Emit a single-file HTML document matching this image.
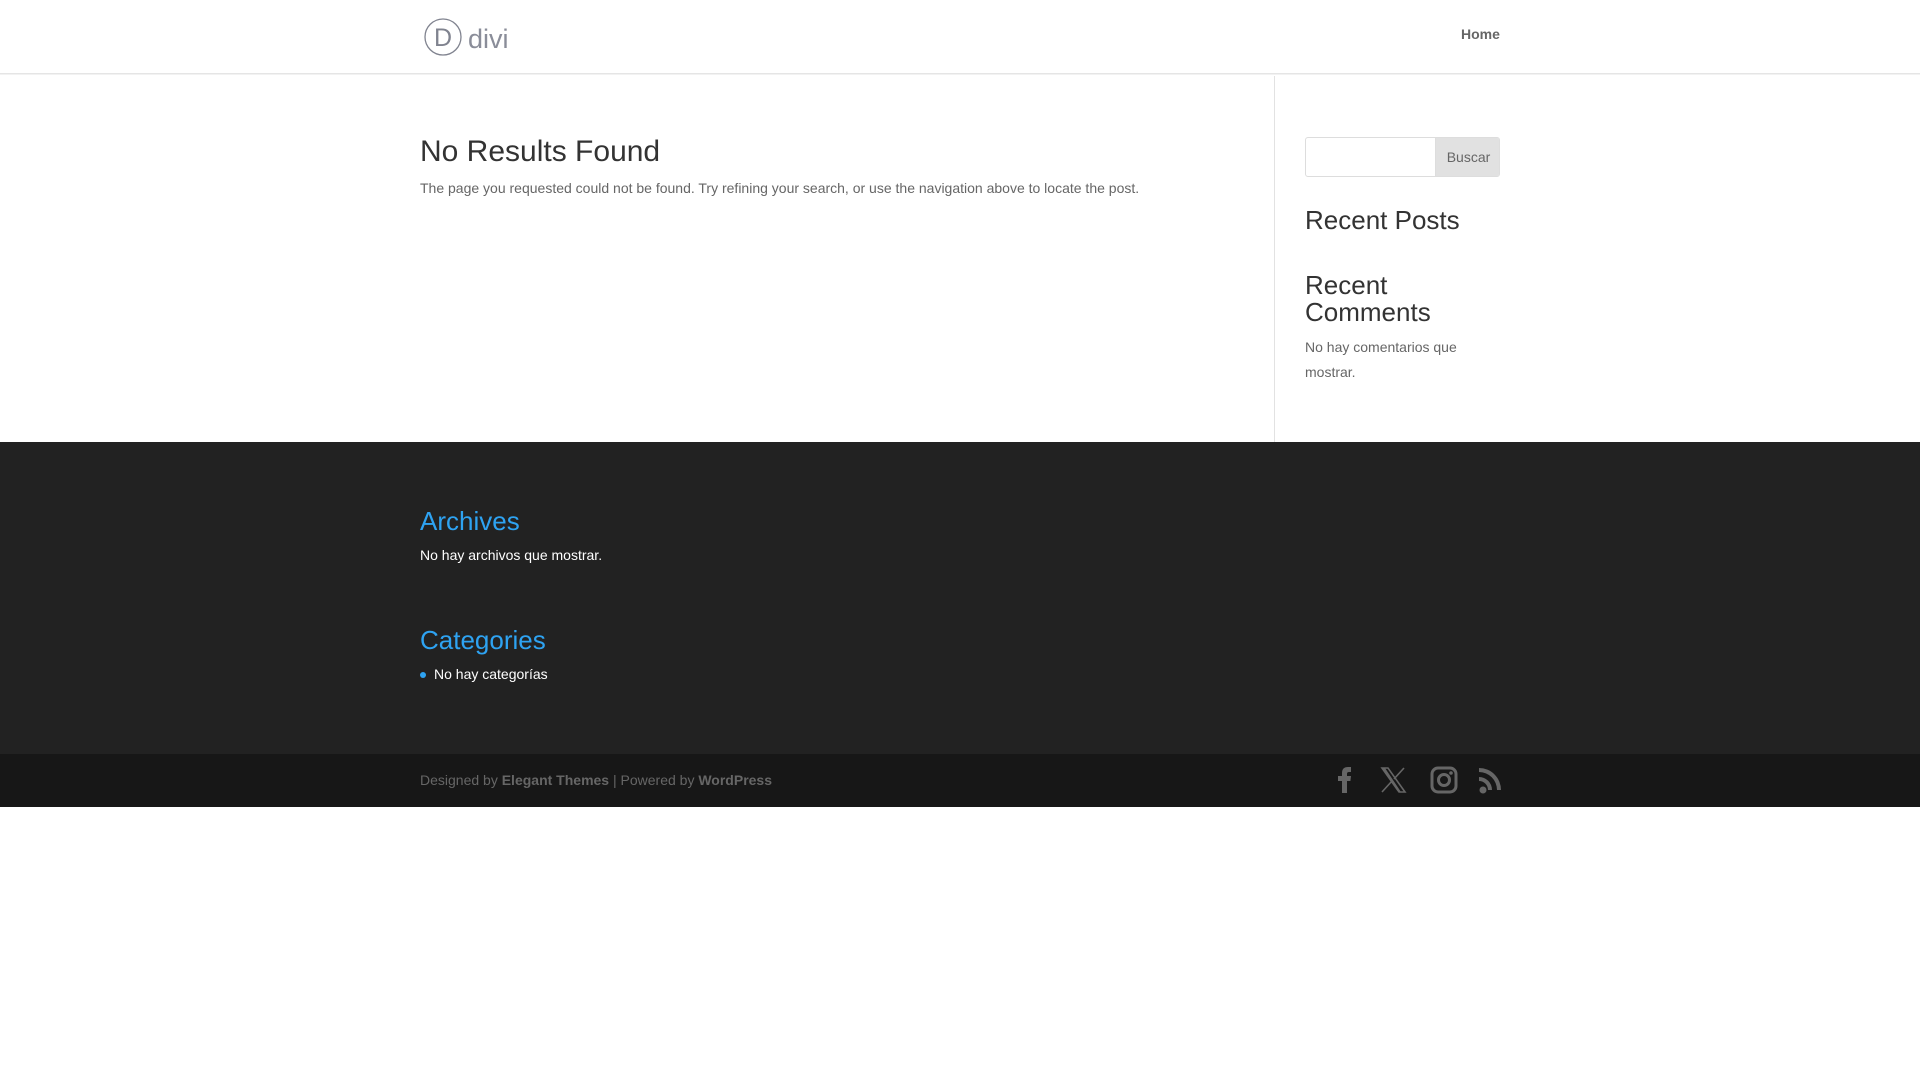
<!DOCTYPE html>
<html><head><meta charset="utf-8"><style>
*{margin:0;padding:0;box-sizing:border-box}
body{width:1920px;height:1080px;background:#fff;font-family:"Liberation Sans",Arial,sans-serif;color:#666;font-size:14px;position:relative;overflow:hidden}
.a{position:absolute;white-space:nowrap}
</style></head><body>
<div class="a" style="left:0;top:0;width:1920px;height:74px;border-bottom:1px solid #e5e5e5;box-shadow:0 1px 0 rgba(0,0,0,.05)"></div>
<svg class="a" style="left:424px;top:17px" width="90" height="42" viewBox="0 0 90 42">
<circle cx="19" cy="20" r="18" fill="none" stroke="#80838f" stroke-width="1.3"/>
<text x="10" y="29" font-family="Liberation Sans" font-size="25" fill="#80838f">D</text>
<text x="44" y="31" font-family="Liberation Sans" font-size="27" fill="#8a8d99">divi</text>
</svg>
<div class="a" style="left:1461px;top:26px;font-size:14px;font-weight:bold;color:#666">Home</div>
<div class="a" style="left:1274px;top:76px;width:1px;height:366px;background:#e2e2e2"></div>
<div class="a" style="left:420px;top:135px;font-size:30px;color:#333">No Results Found</div>
<div class="a" style="left:420px;top:180px;font-size:14px">The page you requested could not be found. Try refining your search, or use the navigation above to locate the post.</div>
<div class="a" style="left:1305px;top:137px;width:195px;height:40px;border:1px solid #ddd;border-radius:3px;overflow:hidden">
<div class="a" style="left:129px;top:0;width:66px;height:38px;background:#e1e1e1;border-left:1px solid #ddd;font-size:14px;color:#666;text-align:center;line-height:38px">Buscar</div></div>
<div class="a" style="left:1305px;top:205px;font-size:26px;color:#333">Recent Posts</div>
<div class="a" style="left:1305px;top:272px;font-size:26px;color:#333;line-height:27px">Recent<br>Comments</div>
<div class="a" style="left:1305px;top:335px;font-size:14px;line-height:25px">No hay comentarios que<br>mostrar.</div>
<div class="a" style="left:0;top:442px;width:1920px;height:312px;background:#222"></div>
<div class="a" style="left:420px;top:506px;font-size:26px;color:#2ea3f2">Archives</div>
<div class="a" style="left:420px;top:547px;font-size:14px;color:#fff">No hay archivos que mostrar.</div>
<div class="a" style="left:420px;top:625px;font-size:26px;color:#2ea3f2">Categories</div>
<div class="a" style="left:420px;top:672px;width:6px;height:6px;border-radius:3px;background:#2ea3f2"></div>
<div class="a" style="left:434px;top:666px;font-size:14px;color:#fff">No hay categorías</div>
<div class="a" style="left:0;top:754px;width:1920px;height:53px;background:#171717"></div>
<div class="a" style="left:420px;top:772px;font-size:14px;color:#666">Designed by <b>Elegant Themes</b> | Powered by <b>WordPress</b></div>
<svg class="a" style="left:1334px;top:766px" width="180" height="28" viewBox="0 0 180 28" fill="#666">
<path d="M8 27V15H4v-5h4V7c0-4 2-6 6-6h3v5h-2c-1.5 0-2 .7-2 2v2h4l-.6 5H13v12z"/>
<path d="M48 2h6l17 24h-6zM50 2l16 24M70 2L60 13M48 26l10-11" fill="none" stroke="#666" stroke-width="1.6"/>
<rect x="98" y="2" width="24" height="24" rx="6" fill="none" stroke="#666" stroke-width="3"/>
<circle cx="110" cy="14" r="5.5" fill="none" stroke="#666" stroke-width="3"/>
<circle cx="117" cy="7" r="1.8"/>
<circle cx="149" cy="24" r="3.5"/>
<path d="M145 11a13 13 0 0 1 13 13h-4a9 9 0 0 0-9-9zM145 2a22 22 0 0 1 22 22h-4A18 18 0 0 0 145 6z"/>
</svg>
</body></html>
